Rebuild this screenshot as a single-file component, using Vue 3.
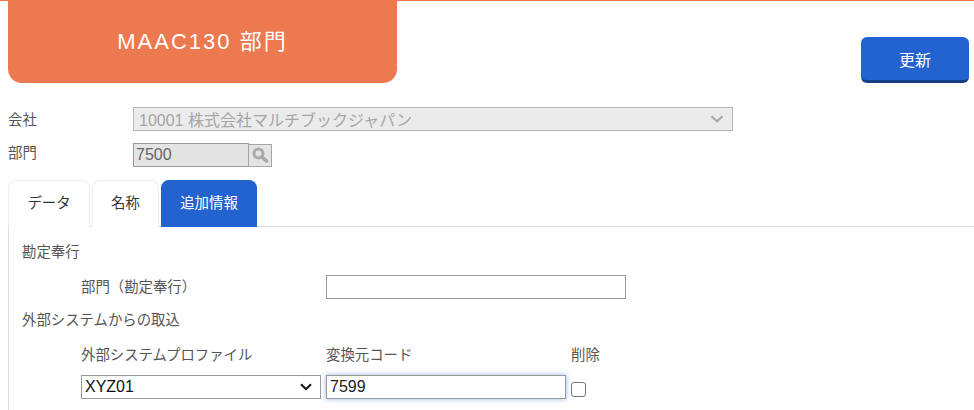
<template>
  <div class="page">
    <header class="top">
      <div class="title">MAAC130 部門</div>
      <button class="update">更新</button>
    </header>

    <div class="row first">
      <label class="lbl">会社</label>
      <div class="company">
        <span>10001 株式会社マルチブックジャパン</span>
        <svg width="14" height="8" viewBox="0 0 14 8"><path d="M1.5 1.2 7 6.2l5.500-5" fill="none" stroke="#a8a8a8" stroke-width="2.200"/></svg>
      </div>
    </div>
    <div class="row second">
      <label class="lbl dept">部門</label>
      <div class="code">7500</div>
      <div class="lookup">
        <svg width="18" height="18" viewBox="0 0 18 18">
          <circle cx="7.500" cy="7.500" r="4.500" fill="none" stroke="#aaa" stroke-width="3"/>
          <path d="M11 11l4.500 4" stroke="#aaa" stroke-width="3.600" stroke-linecap="round"/>
        </svg>
      </div>
    </div>

    <nav class="tabs">
      <div v-for="t in tabs" :key="t.name" class="tab" :class="{ active: t.active }" :style="{ width: t.width + 'px' }">{{ t.name }}</div>
    </nav>

    <section class="panel">
      <div class="heading">勘定奉行</div>
      <div class="field">
        <label class="field-label">部門（勘定奉行）</label>
        <input class="text wide" type="text" />
      </div>
      <div class="heading second-heading">外部システムからの取込</div>
      <div class="cols">
        <span class="c1">外部システムプロファイル</span>
        <span class="c2">変換元コード</span>
        <span>削除</span>
      </div>
      <div class="inputs">
        <div class="profile">
          <span>XYZ01</span>
          <svg width="12" height="8" viewBox="0 0 12 8"><path d="M1 1.300 6 6.200l5-4.900" fill="none" stroke="#111" stroke-width="2"/></svg>
        </div>
        <input class="text source" type="text" value="7599" />
        <span class="check"></span>
      </div>
    </section>
  </div>
</template>

<script setup>
const tabs = [
  { name: 'データ', width: 82 },
  { name: '名称', width: 67 },
  { name: '追加情報', width: 96, active: true },
]
</script>

<style>
html, body { background: #fff; overflow: hidden; }
</style>

<style scoped>
.page {
  width: 974px;
  height: 410px;
  overflow: hidden;
  font-family: "Liberation Sans", "Noto Sans CJK JP", sans-serif;
  font-size: 14.400px;
  color: #555;
  border-top: 1px solid #ec7950;
  box-sizing: border-box;
}
.top {
  display: flex;
  justify-content: space-between;
  align-items: flex-end;
  height: 82px;
  padding: 0 5px 0 8px;
}
.title {
  width: 389px;
  height: 82px;
  background: #ec7950;
  border-radius: 0 0 14px 14px;
  color: #fff;
  font-size: 22px;
  letter-spacing: 2px;
  line-height: 82px;
  text-align: center;
}
.update {
  width: 108px;
  height: 46px;
  background: #2363cf;
  border: 0;
  border-bottom: 3px solid #123f85;
  border-radius: 6px;
  color: #fff;
  font: inherit;
  font-size: 16px;
  padding: 0;
}
.row {
  display: flex;
  align-items: center;
  height: 24px;
  padding-left: 8px;
}
.first { margin-top: 24px; }
.second { margin-top: 12px; }
.lbl { width: 125px; margin-bottom: 2px; }
.dept { margin-bottom: 8px; }
.company {
  width: 600px;
  height: 24px;
  box-sizing: border-box;
  display: flex;
  align-items: center;
  justify-content: space-between;
  padding: 0 8px 0 5px;
  background: #ebebeb;
  border: 1px solid #b5b5b5;
  color: #a5a5a5;
  font-size: 16px;
}
.code {
  width: 116px;
  height: 24px;
  box-sizing: border-box;
  padding-left: 2px;
  background: #e4e4e4;
  border: 1px solid #999;
  color: #666;
  font-size: 16px;
  line-height: 22px;
}
.lookup {
  width: 24px;
  height: 23px;
  margin-left: -1px;
  box-sizing: border-box;
  display: flex;
  align-items: center;
  justify-content: center;
  background: #e4e4e4;
  border: 1px solid #a5a5a5;
}
.tabs {
  display: flex;
  gap: 2px;
  margin: 13px 0 0 8px;
  height: 47px;
  position: relative;
  z-index: 1;
}
.tab {
  box-sizing: border-box;
  height: 47px;
  line-height: 44px;
  text-align: center;
  color: #333;
  background: #fff;
  border: 1px solid #eee;
  border-bottom: 0;
  border-radius: 8px 8px 0 0;
}
.tab.active {
  background: #2363cf;
  border-color: #2363cf;
  color: #fff;
}
.panel {
  margin: -1px 0 0 8px;
  padding: 0 0 0 13px;
  height: 184px;
  border-top: 1px solid #ddd;
  border-left: 1px solid #ddd;
}
.heading {
  padding-top: 15px;
  line-height: 20px;
}
.field {
  display: flex;
  align-items: center;
  height: 24px;
  margin-top: 13px;
  padding-left: 59px;
}
.field-label { width: 245px; margin-bottom: 4px; }
.text {
  box-sizing: border-box;
  height: 24px;
  border: 1px solid #999;
  background: #fff;
  outline: 0;
  padding: 0 3px;
  font: inherit;
  font-size: 16px;
  color: #222;
}
.wide { width: 300px; }
.second-heading { padding-top: 11px; }
.cols {
  display: flex;
  margin-top: 15px;
  padding-left: 59px;
  line-height: 20px;
}
.c1 { width: 245px; }
.c2 { width: 245px; }
.inputs {
  display: flex;
  align-items: center;
  height: 24px;
  margin-top: 10px;
  padding-left: 59px;
}
.profile {
  box-sizing: border-box;
  width: 240px;
  height: 24px;
  display: flex;
  align-items: center;
  justify-content: space-between;
  padding: 0 8px 0 3px;
  border: 1px solid #999;
  background: #fff;
  color: #111;
  font-size: 16px;
}
.source {
  width: 240px;
  margin-left: 5px;
  border-color: #999;
  box-shadow: 0 0 5px #8fb4ea;
}
.check {
  width: 13px;
  height: 13px;
  margin: 5px 0 0 5px;
  border: 1px solid #777;
  border-radius: 3px;
  background: #fff;
}
</style>
